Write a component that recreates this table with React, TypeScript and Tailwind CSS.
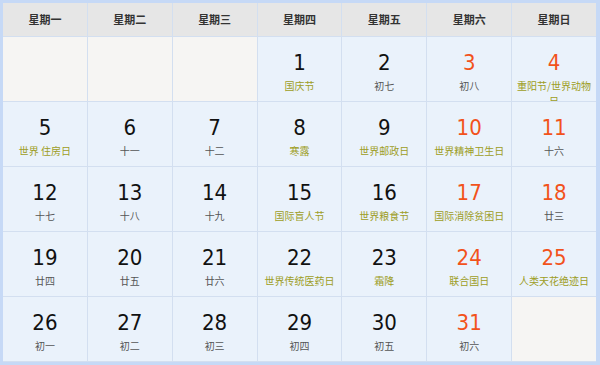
const WEEK = ['星期一', '星期二', '星期三', '星期四', '星期五', '星期六', '星期日'];

type Day = { d: number; text: string; fest?: boolean } | null;

const DAYS: Day[] = [
  null,
  null,
  null,
  { d: 1, text: '国庆节', fest: true },
  { d: 2, text: '初七' },
  { d: 3, text: '初八' },
  { d: 4, text: '重阳节/世界动物日', fest: true },
  { d: 5, text: '世界 住房日', fest: true },
  { d: 6, text: '十一' },
  { d: 7, text: '十二' },
  { d: 8, text: '寒露', fest: true },
  { d: 9, text: '世界邮政日', fest: true },
  { d: 10, text: '世界精神卫生日', fest: true },
  { d: 11, text: '十六' },
  { d: 12, text: '十七' },
  { d: 13, text: '十八' },
  { d: 14, text: '十九' },
  { d: 15, text: '国际盲人节', fest: true },
  { d: 16, text: '世界粮食节', fest: true },
  { d: 17, text: '国际消除贫困日', fest: true },
  { d: 18, text: '廿三' },
  { d: 19, text: '廿四' },
  { d: 20, text: '廿五' },
  { d: 21, text: '廿六' },
  { d: 22, text: '世界传统医药日', fest: true },
  { d: 23, text: '霜降', fest: true },
  { d: 24, text: '联合国日', fest: true },
  { d: 25, text: '人类天花绝迹日', fest: true },
  { d: 26, text: '初一' },
  { d: 27, text: '初二' },
  { d: 28, text: '初三' },
  { d: 29, text: '初四' },
  { d: 30, text: '初五' },
  { d: 31, text: '初六' },
  null,
];

const cjk = "font-['Tahoma','Noto_Sans_CJK_SC',sans-serif]";

export default function App() {
  return (
    <div className="w-[600px] h-[365px] bg-[#c6d9f6] pt-[3px] pl-[3px] pr-[4px] pb-[3px]">
      <div className="grid grid-cols-7 grid-rows-[33px_repeat(5,64px)] gap-px bg-[#d3dff0] h-full">
        {WEEK.map((w) => (
          <div
            key={w}
            className={`flex items-center justify-center bg-[#e6e6e6] text-[11px] font-bold text-[#333] ${cjk}`}
          >
            {w}
          </div>
        ))}
        {DAYS.map((day, i) => {
          if (!day) return <div key={i} className="bg-[#f6f5f3]" />;
          const weekend = i % 7 >= 5;
          return (
            <div key={i} className="bg-[#eaf2fb] overflow-hidden px-[2px] pt-[13px] text-center">
              <div
                className={`text-[22px] leading-[26px] font-['DejaVu_Sans_Condensed','DejaVu_Sans',sans-serif] ${
                  weekend ? 'text-[#f2521b]' : 'text-[#111]'
                }`}
              >
                {day.d}
              </div>
              <div
                className={`mt-[2px] text-[10px] leading-[15px] ${cjk} ${
                  day.fest ? 'text-[#9d9d24]' : 'text-[#555]'
                }`}
              >
                {day.text}
              </div>
            </div>
          );
        })}
      </div>
    </div>
  );
}
